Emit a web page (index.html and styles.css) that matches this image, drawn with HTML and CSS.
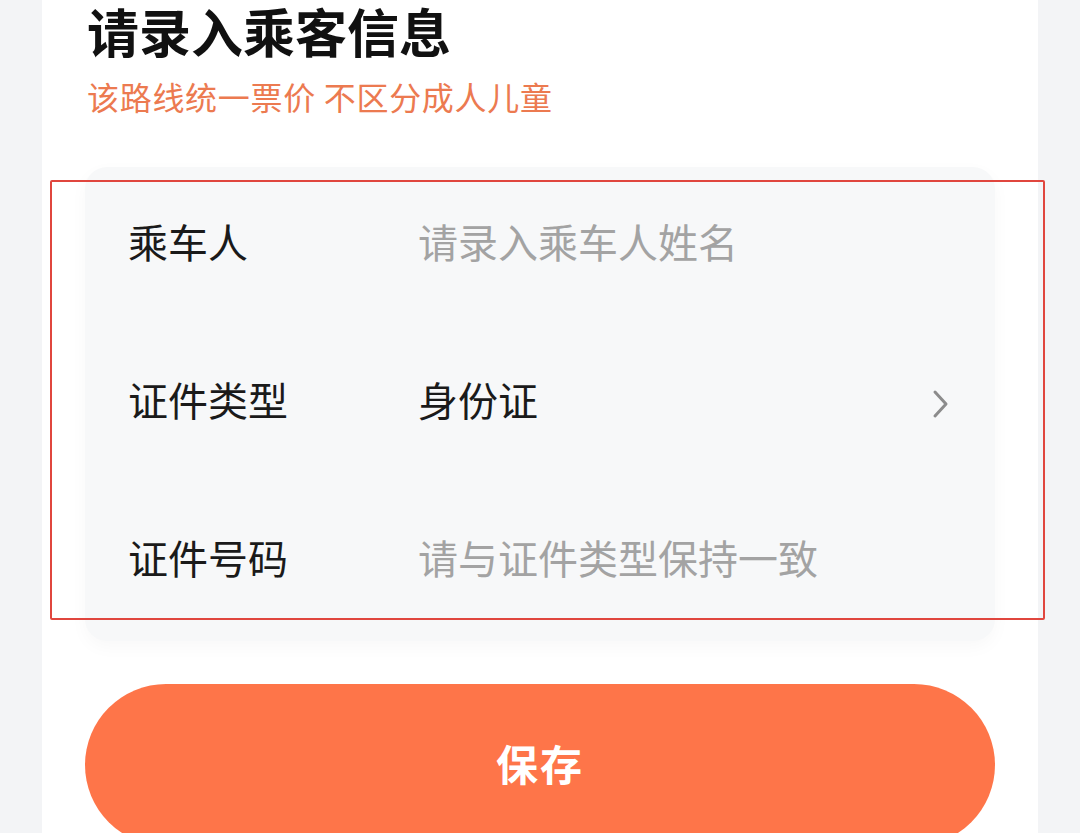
FILE: index.html
```html
<!DOCTYPE html>
<html lang="zh-CN">
<head>
    <meta charset="UTF-8">
    <title>请录入乘客信息</title>
    <link rel="stylesheet" href="styles.css">
</head>
<body>
    <div class="page">
        <div class="header">
            <h1 class="title">请录入乘客信息</h1>
            <p class="subtitle">该路线统一票价 不区分成人儿童</p>
        </div>

        <div class="card">
            <div class="row">
                <span class="label">乘车人</span>
                <span class="value placeholder">请录入乘车人姓名</span>
            </div>
            <div class="row">
                <span class="label">证件类型</span>
                <span class="value">身份证</span>
                <svg class="chevron" width="20" height="32" viewBox="0 0 20 32">
                    <path d="M4 4 L15 16 L4 28" fill="none" stroke="#8c8c8c" stroke-width="3" stroke-linecap="round" stroke-linejoin="round"/>
                </svg>
            </div>
            <div class="row">
                <span class="label">证件号码</span>
                <span class="value placeholder">请与证件类型保持一致</span>
            </div>
        </div>

        <button class="save" type="button">保存</button>
    </div>

    <div class="highlight"></div>
</body>
</html>
```

FILE: styles.css
```css
body {
    margin: 0;
    background: #f3f4f6;
    font-family: "Noto Sans CJK SC", "Noto Sans", sans-serif;
    color: #1a1a1a;
    overflow: hidden;
}
.page {
    width: 996px;
    margin-left: 42px;
    min-height: 833px;
    background: #ffffff;
}
.header {
    padding-left: 45px;
}
.title {
    margin: 0;
    font-size: 52px;
    line-height: 62px;
    font-weight: 700;
    color: #111;
}
.subtitle {
    margin: 12px 0 0;
    font-size: 32px;
    line-height: 44px;
    letter-spacing: 0.7px;
    color: #ec7a50;
}
.card {
    margin: 49px 43px 0;
    background: #f7f8f9;
    border-radius: 22px;
    box-shadow: 0 6px 18px rgba(0,0,0,0.03);
}
.row {
    display: flex;
    align-items: center;
    height: 148px;
    padding: 0 44px 10px 43px;
    font-size: 40px;
}
.label {
    width: 290px;
    color: #1a1a1a;
}
.value {
    flex: 1;
    color: #1a1a1a;
}
.placeholder {
    color: #a3a3a3;
}
.chevron {
    display: block;
    margin-top: 10px;
}
.save {
    display: block;
    width: 910px;
    height: 162px;
    margin: 43px 43px 0;
    padding-bottom: 6px;
    border: none;
    border-radius: 81px;
    background: #fe7549;
    color: #ffffff;
    font-family: inherit;
    font-size: 42px;
    font-weight: 700;
    letter-spacing: 2px;
}
.highlight {
    position: absolute;
    left: 50px;
    top: 180px;
    width: 991px;
    height: 436px;
    border: 2px solid #e0463e;
    border-radius: 2px;
}
```
